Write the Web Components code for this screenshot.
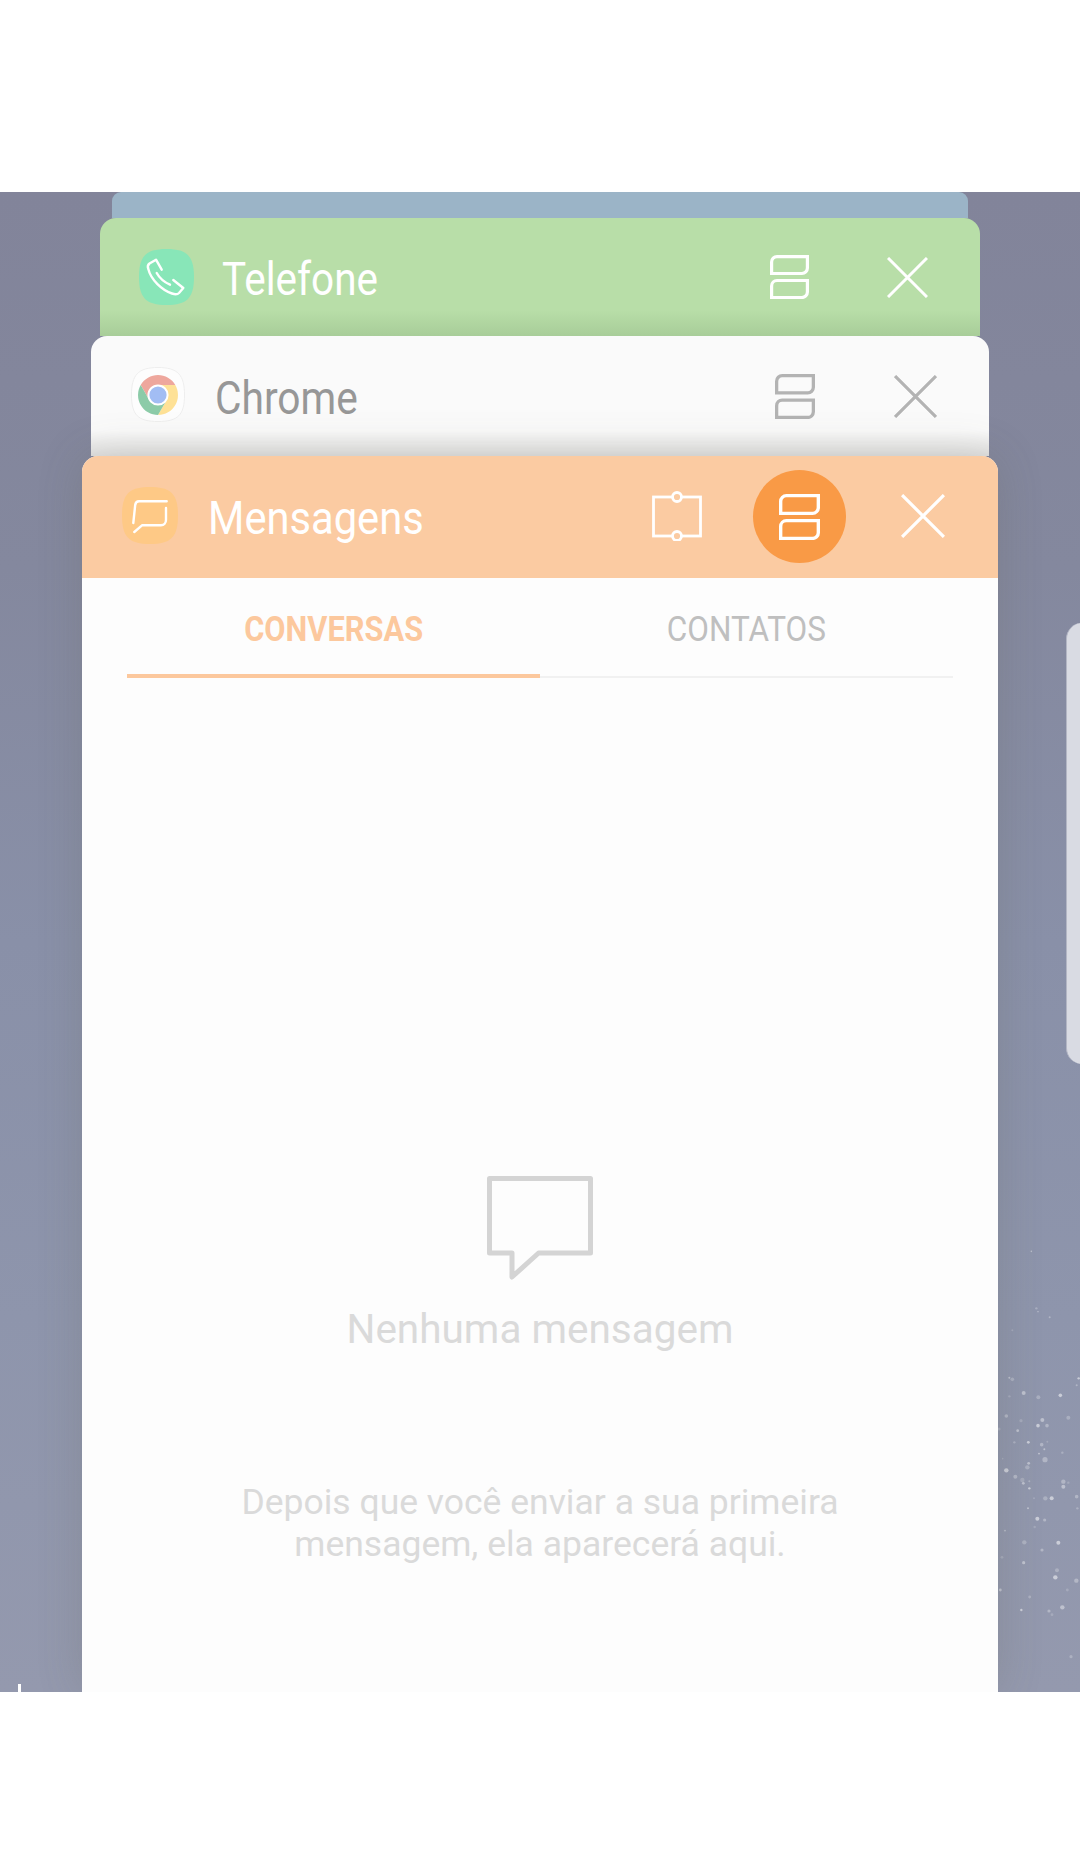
<!DOCTYPE html>
<html lang="pt">
<head>
<meta charset="utf-8">
<title>Recentes</title>
<style>
    html, body { margin: 0; background: #fff; }
    body { font-family: Roboto, "Liberation Sans", sans-serif; }
</style>
</head>
<body>
<recent-screen>
    <task-card style="--w:856px;--h:26px;--bg:#9bb4c7;--fade:transparent;--r:9px"></task-card>
    <task-card style="--w:880px;--h:118px;--bg:#b8dea8;--fade:rgba(60,90,50,.13);--r:16px">
        <app-header title-text="Telefone" style="--pl:39px;--pt:31px;--gap:28px;--color:#fff;--top:7px;--sx:.88">
            <svg slot="icon" width="55" height="56" viewBox="0 0 55 56">
                <path d="M27.500 0C48 0 55 7 55 28S48 56 27.500 56 0 49 0 28 7 0 27.500 0z" fill="#88e6b8"/>
                <path d="M22.700 20.700L17 10.700 10.500 14.500C8.500 16 8.500 18 9.300 20 12 31 23 41 33 44.500 36 45.500 39 45 40 44L44.300 39 34.300 31M17.700 24C21 30 25 33 31 35.700" fill="none" stroke="#fff" stroke-width="2.400" stroke-linecap="round" stroke-linejoin="round"/>
            </svg>
            <split-icon slot="actions" style="--size:39px;--height:44px;--color:#fff;margin:6px 0 0 0"></split-icon>
            <close-icon slot="actions" style="--size:41px;--color:#fff;margin:8px 52px 0 78px"></close-icon>
        </app-header>
    </task-card>
    <task-card style="--w:898px;--h:120px;--bg:#fafafa;--fade:rgba(0,0,0,.1);--r:16px">
        <app-header title-text="Chrome" style="--pl:40px;--pt:31px;--gap:30px;--color:#979797;--top:8px;--sx:.885">
            <svg slot="icon" width="54" height="55" viewBox="-27 -28 54 55">
                <path d="M0-27.500C20-27.500 26.500-20 26.500 0S20 26.500 0 26.500-26.500 20-26.500 0-20-27.500 0-27.500z" fill="#fdfdfd" stroke="#eeeeee"/>
                <path d="M-17.300-10A20 20 0 0 1 17.300-10H0L-8.700 5z" fill="#eea79d"/>
                <path d="M17.300-10A20 20 0 0 1 0 20L8.700 5 0-10z" fill="#fee196"/>
                <path d="M0 20A20 20 0 0 1-17.300-10L-8.700 5H8.700z" fill="#8ccba8"/>
                <circle r="9.600" fill="#a2bdf4" stroke="#fff" stroke-width="2"/>
            </svg>
            <split-icon slot="actions" style="--size:40px;--height:45px;--color:#b3b3b3;margin:7px 0 0 0"></split-icon>
            <close-icon slot="actions" style="--size:43px;--color:#b3b3b3;margin:8px 52px 0 79px"></close-icon>
        </app-header>
    </task-card>
    <task-card style="--w:916px;--h:1236px;--bg:#fdfdfd;--fade:transparent;--r:16px;--shadow:0 0 46px rgba(90,90,70,.2)">
        <app-header title-text="Mensagens" style="--pl:40px;--pt:31px;--gap:30px;--color:#fff;--top:8px;--hbg:#fbcba2;--hh:122px;--sx:.906">
            <svg slot="icon" width="56" height="57" viewBox="0 0 56 57">
                <path d="M28 0C49 0 56 7 56 28.500S49 57 28 57 0 50 0 28.500 7 0 28 0z" fill="#fec986"/>
                <path d="M44.700 14.300H17C14.500 14.300 13.500 15.500 13.200 18L11.300 36M44 21V32.700C44 36 42 38.300 39 38.300H20L12.300 45" fill="none" stroke="#fff" stroke-width="2.400" stroke-linecap="round" stroke-linejoin="round"/>
            </svg>
            <svg slot="actions" width="50" height="50" viewBox="0 0 50 50" style="margin:4px 0 0 0">
                <rect x="1.500" y="6" width="47" height="39" fill="none" stroke="#fff" stroke-width="2.800"/>
                <circle cx="25" cy="6" r="4.500" fill="#fbcba2" stroke="#fff" stroke-width="2.800"/>
                <circle cx="25" cy="45" r="4.500" fill="#fbcba2" stroke="#fff" stroke-width="2.800"/>
            </svg>
            <span slot="actions" class="on" style="display:flex;align-items:center;justify-content:center;width:93px;height:93px;border-radius:50%;background:#f99a46;margin:-17px 0 0 51px">
                <split-icon style="--size:41px;--height:46px;--color:#fff"></split-icon>
            </span>
            <close-icon slot="actions" style="--size:44px;--color:#fff;margin:7px 53px 0 55px"></close-icon>
        </app-header>
        <tab-bar active="CONVERSAS" other="CONTATOS"></tab-bar>
        <empty-state title-text="Nenhuma mensagem">Depois que você enviar a sua primeira<br>mensagem, ela aparecerá aqui.</empty-state>
    </task-card>
</recent-screen>

<script>
    class RecentScreen extends HTMLElement {
        constructor() {
            super();
            this.attachShadow({ mode: 'open' });
            // speckles read off the wallpaper: x, y, diameter, in 3x crop units
            const dots = [[214,154,4],[229,325,6],[234,335,3],[269,352,5],[157,391,5],[148,533,5],[157,538,9],[356,535,6],[350,556,5],[148,589,6],[191,579,10],[235,592,10],[301,586,9],[139,648,9],[183,662,8],[247,660,10],[325,653,10],[234,677,9],[261,677,9],[117,687,8],[173,692,7],[163,727,6],[205,727,7],[245,734,9],[262,725,5],[253,748,5],[307,758,6],[237,761,4],[255,779,13],[128,776,4],[206,790,7],[202,802,11],[139,811,11],[166,830,10],[187,840,11],[190,850,7],[208,844,5],[208,865,6],[310,845,11],[325,848,6],[310,860,10],[256,895,11],[275,895,10],[350,890,9],[222,895,5],[204,925,5],[352,925,6],[232,956,10],[254,960,8],[224,981,6],[135,992,4],[193,1027,11],[295,1028,10],[246,1050,8],[126,1072,7],[191,1088,8],[291,1111,10],[286,1132,11],[349,1142,11],[322,1170,7],[121,1170,7],[209,1191,7],[184,1230,6],[267,1233,8],[276,1244,7],[307,1222,11],[333,1370,8]];
            const circles = dots.map(([x, y, d], i) =>
                `<circle cx="${x / 3}" cy="${y / 3}" r="${d / 5}" fill="#fff" opacity="${[.4, .24, .52, .3, .18][i % 5]}"/>`).join('');
            this.shadowRoot.innerHTML = `
                <style>
                    :host { display: flex; flex-direction: column; height: 1864px; background: #fff; }
                    .top { height: 192px; flex: none; }
                    .wall {
                        position: relative;
                        height: 1500px;
                        flex: none;
                        overflow: hidden;
                        display: flex;
                        flex-direction: column;
                        align-items: center;
                        background: linear-gradient(180deg, #82849a 0%, #84889e 25%, #8990a8 50%, #8e95ac 75%, #9499ae 100%);
                    }
                    .handle {
                        position: absolute;
                        left: 1066px;
                        top: 431px;
                        width: 30px;
                        height: 441px;
                        border-radius: 16px 0 0 16px;
                        background: #d9dbe3;
                        border-left: 1px solid #b3b6c4;
                        box-sizing: border-box;
                    }
                    .dots { position: absolute; left: 960px; top: 1008px; }
                    .tick { position: absolute; left: 18px; bottom: 0; width: 3px; height: 8px; background: #fff; }
                </style>
                <div class="top"></div>
                <div class="wall">
                    <slot></slot>
                    <div class="handle"></div>
                    <svg class="dots" width="120" height="492" viewBox="0 0 120 492">${circles}</svg>
                    <div class="tick"></div>
                </div>`;
        }
    }
    customElements.define('recent-screen', RecentScreen);

    class TaskCard extends HTMLElement {
        constructor() {
            super();
            this.attachShadow({ mode: 'open' });
            this.shadowRoot.innerHTML = `
                <style>
                    :host {
                        display: flex;
                        flex-direction: column;
                        flex: none;
                        position: relative;
                        z-index: 1;
                        box-sizing: border-box;
                        width: var(--w);
                        height: var(--h);
                        border-radius: var(--r) var(--r) 0 0;
                        overflow: hidden;
                        box-shadow: var(--shadow, none);
                        background: linear-gradient(0deg, var(--fade) 0, transparent 26px), var(--bg);
                    }
                </style>
                <slot></slot>`;
        }
    }
    customElements.define('task-card', TaskCard);

    class AppHeader extends HTMLElement {
        constructor() {
            super();
            this.attachShadow({ mode: 'open' });
            this.shadowRoot.innerHTML = `
                <style>
                    :host {
                        display: flex;
                        box-sizing: border-box;
                        height: var(--hh, auto);
                        padding: var(--pt) 0 0 var(--pl);
                        background: var(--hbg, transparent);
                        color: var(--color);
                    }
                    .icon { flex: none; height: 57px; }
                    .title {
                        display: block;
                        margin: var(--top) 0 0 var(--gap);
                        font-size: 46px;
                        line-height: 46px;
                        white-space: nowrap;
                        transform: scaleX(var(--sx));
                        transform-origin: left;
                    }
                    .space { flex: 1; }
                    .actions { display: flex; align-items: flex-start; flex: none; }
                </style>
                <div class="icon"><slot name="icon"></slot></div>
                <span class="title"></span>
                <div class="space"></div>
                <div class="actions"><slot name="actions"></slot></div>`;
            this.shadowRoot.querySelector('.title').textContent = this.getAttribute('title-text');
        }
    }
    customElements.define('app-header', AppHeader);

    const splitTemplate = document.createElement('template');
    splitTemplate.innerHTML = `
        <style>
            :host { display: block; flex: none; width: var(--size); height: var(--height); color: var(--color); }
            svg { display: block; width: 100%; height: 100%; }
        </style>
        <svg viewBox="0 0 39 44" preserveAspectRatio="none" fill="none" stroke="currentColor" stroke-width="3.200">
            <path d="M7 1.600H37.400V13a5.500 5.500 0 0 1-5.500 5.500H1.600V7A5.400 5.400 0 0 1 7 1.600z"/>
            <path d="M7 25.500H37.400V37a5.500 5.500 0 0 1-5.500 5.500H1.600V31A5.500 5.500 0 0 1 7 25.500z"/>
        </svg>`;

    class SplitIcon extends HTMLElement {
        constructor() {
            super();
            this.attachShadow({ mode: 'open' });
            this.shadowRoot.appendChild(splitTemplate.content.cloneNode(true));
        }
    }
    customElements.define('split-icon', SplitIcon);

    class CloseIcon extends HTMLElement {
        constructor() {
            super();
            this.attachShadow({ mode: 'open' });
            this.shadowRoot.innerHTML = `
                <style>
                    :host { display: block; flex: none; width: var(--size); height: var(--size); color: var(--color); }
                    svg { display: block; width: 100%; height: 100%; }
                </style>
                <svg viewBox="0 0 41 41" fill="none" stroke="currentColor" stroke-width="3"><path d="M1 1L40 40M40 1L1 40"/></svg>`;
        }
    }
    customElements.define('close-icon', CloseIcon);

    class TabBar extends HTMLElement {
        constructor() {
            super();
            this.attachShadow({ mode: 'open' });
            this.shadowRoot.innerHTML = `
                <style>
                    :host { display: flex; flex: none; padding: 0 45px; }
                    .tab {
                        flex: 1;
                        box-sizing: border-box;
                        height: 100px;
                        display: flex;
                        justify-content: center;
                        padding-top: 31px;
                        font-size: 35px;
                        line-height: 41px;
                        font-weight: 400;
                        color: #bfbfbf;
                        border-bottom: 2px solid #f1f1f1;
                    }
                    .tab span { display: block; transform: scaleX(.9); white-space: nowrap; }
                    .tab.on { color: #fcc89d; font-weight: 700; border-bottom: 4px solid #fcc89d; }
                    .tab.on span { transform: scaleX(.88); }
                </style>
                <div class="tab on"><span class="a"></span></div>
                <div class="tab"><span class="b"></span></div>`;
            this.shadowRoot.querySelector('.a').textContent = this.getAttribute('active');
            this.shadowRoot.querySelector('.b').textContent = this.getAttribute('other');
        }
    }
    customElements.define('tab-bar', TabBar);

    class EmptyState extends HTMLElement {
        constructor() {
            super();
            this.attachShadow({ mode: 'open' });
            this.shadowRoot.innerHTML = `
                <style>
                    :host { display: flex; flex-direction: column; align-items: center; padding-top: 498px; color: #dadada; }
                    svg { display: block; }
                    h2 { margin: 25px 0 0; font-size: 40.500px; line-height: 48px; font-weight: 400; white-space: nowrap; }
                    p { margin: 0; padding-top: 129px; font-size: 35.500px; line-height: 41.500px; text-align: center; white-space: nowrap; }
                </style>
                <svg width="106" height="104" viewBox="0 0 106 104" fill="none" stroke="#d4d4d4" stroke-width="5" stroke-linejoin="round" stroke-linecap="round">
                    <path d="M2.500 2.500H103.500V77H51.600L25 101V77H2.500z"/>
                </svg>
                <h2></h2>
                <p><slot></slot></p>`;
            this.shadowRoot.querySelector('h2').textContent = this.getAttribute('title-text');
        }
    }
    customElements.define('empty-state', EmptyState);
</script>
</body>
</html>
